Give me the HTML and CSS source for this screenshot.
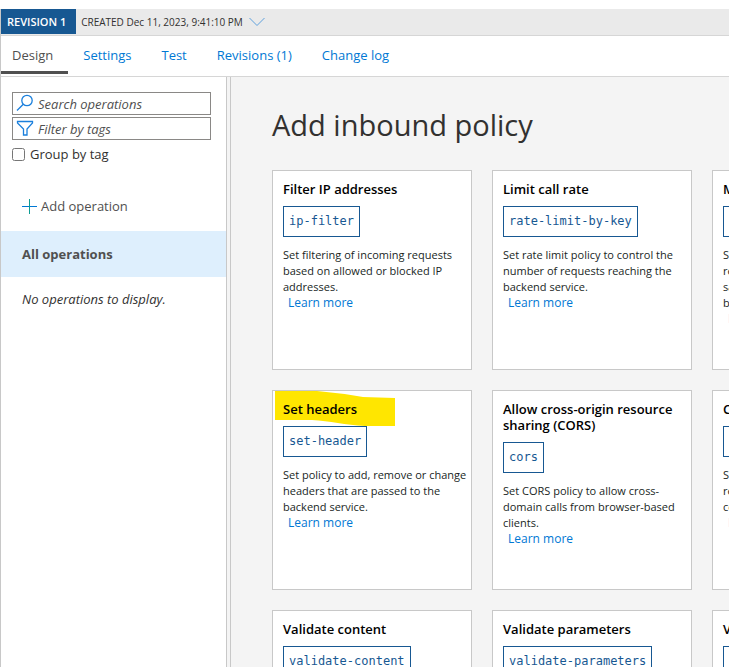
FILE: index.html
```html
<!DOCTYPE html>
<html lang="en">
<head>
<meta charset="utf-8">
<title>Add inbound policy</title>
<link rel="stylesheet" href="styles.css">
</head>
<body>
<div class="app">
  <header class="revision-bar">
    <span class="revision-badge">REVISION 1</span>
    <button class="revision-menu" type="button">CREATED Dec 11, 2023, 9:41:10 PM
      <svg class="chevron" width="16" height="10" viewBox="0 0 16 10" aria-hidden="true"><path d="M.5 1 8 8.500 15.500 1"/></svg>
    </button>
  </header>
  <nav class="tabs">
    <a class="tab tab-active" href="#design">Design</a>
    <a class="tab" href="#settings">Settings</a>
    <a class="tab" href="#test">Test</a>
    <a class="tab" href="#revisions">Revisions (1)</a>
    <a class="tab" href="#changelog">Change log</a>
  </nav>
  <div class="workspace">
    <aside class="sidebar">
      <div class="filters">
        <label class="field">
          <svg width="18" height="20" viewBox="0 0 18 20" aria-hidden="true"><circle cx="11" cy="6.500" r="5.200"/><path d="M7.300 10.200 1 16.500"/></svg>
          <input type="text" placeholder="Search operations" aria-label="Search operations">
        </label>
        <label class="field">
          <svg width="18" height="20" viewBox="0 0 18 20" aria-hidden="true"><path d="M1.500 2.500h15v1.500L11 10V16H7.500V10L1.500 4z"/></svg>
          <input type="text" placeholder="Filter by tags" aria-label="Filter by tags">
        </label>
        <label class="group-toggle"><input type="checkbox">Group by tag</label>
      </div>
      <button class="add-operation" type="button">
        <svg width="15" height="15" viewBox="0 0 15 15" aria-hidden="true"><path class="plus-h" d="M0 7.500h15"/><path class="plus-v" d="M7.500 0v15"/></svg>
        Add operation
      </button>
      <a class="all-operations" href="#all">All operations</a>
      <p class="empty">No operations to display.</p>
    </aside>
    <div class="splitter"></div>
    <main class="content">
      <h1>Add inbound policy</h1>
      <div class="cards">
        <article class="card">
          <h2>Filter IP addresses</h2>
          <code>ip-filter</code>
          <p>Set filtering of incoming requests<br>based on allowed or blocked IP<br>addresses.</p>
          <a href="#ip-filter">Learn more</a>
        </article>
        <article class="card">
          <h2>Limit call rate</h2>
          <code>rate-limit-by-key</code>
          <p>Set rate limit policy to control the<br>number of requests reaching the<br>backend service.</p>
          <a href="#rate-limit">Learn more</a>
        </article>
        <article class="card">
          <h2>Mock responses</h2>
          <code>mock-response</code>
          <p>Set mocking policy to<br>return a response based on the<br>samples. It does not call the<br>backend.</p>
          <a href="#mock">Learn more</a>
        </article>
        <article class="card">
          <svg class="marker" width="121" height="36" viewBox="0 0 121 36" aria-hidden="true"><path d="M0 0H42Q65 2 88 6L120 7V35H90C70 34 55 30 37 29H0z"/></svg>
          <h2>Set headers</h2>
          <code>set-header</code>
          <p>Set policy to add, remove or change<br>headers that are passed to the<br>backend service.</p>
          <a href="#set-header">Learn more</a>
        </article>
        <article class="card">
          <h2>Allow cross-origin resource<br>sharing (CORS)</h2>
          <code>cors</code>
          <p>Set CORS policy to allow cross-<br>domain calls from browser-based<br>clients.</p>
          <a href="#cors">Learn more</a>
        </article>
        <article class="card">
          <h2>Cache responses</h2>
          <code>cache-lookup</code>
          <p>Set response caching policies to<br>reduce latency and bandwidth<br>consumption.</p>
          <a href="#cache">Learn more</a>
        </article>
        <article class="card">
          <h2>Validate content</h2>
          <code>validate-content</code>
        </article>
        <article class="card">
          <h2>Validate parameters</h2>
          <code>validate-parameters</code>
        </article>
        <article class="card">
          <h2>Validate headers</h2>
          <code>validate-headers</code>
        </article>
      </div>
    </main>
  </div>
</div>
</body>
</html>
```
FILE: styles.css
```css
* { box-sizing: border-box; }
body {
  margin: 0;
  height: 100vh;
  overflow: hidden;
  background: #fff;
  color: #323130;
  font: 13px/18px "Open Sans", "Noto Sans", sans-serif;
}
a { color: #0078d4; text-decoration: none; }
button { border: 0; padding: 0; background: none; font: inherit; color: inherit; }
svg { flex: none; fill: none; stroke: #1a7fdc; }
.app {
  display: flex;
  flex-direction: column;
  height: calc(100vh - 9px);
  margin-top: 9px;
  border-left: 1px solid #c8c8c8;
}
.revision-bar {
  display: flex;
  flex: none;
  height: 27px;
  background: #eaeaea;
  border-bottom: 1px solid #d6d6d6;
  font-size: 11px;
}
.revision-badge {
  height: 25px;
  padding: 0 10px 0 6px;
  background: #175892;
  color: #fff;
  font-weight: 600;
  line-height: 26px;
}
.revision-menu { display: flex; align-items: center; gap: 6px; padding-left: 5px; font-size: 10px; }
.chevron { stroke: #5ea0dc; }
.tabs { display: flex; flex: none; height: 41px; border-bottom: 1px solid #d6d6d6; }
.tab { padding: 0 15px; line-height: 38px; }
.tab:first-child { padding-left: 11px; }
.tab-active { height: 38px; border-bottom: 3px solid #505050; color: #505050; }
.workspace { display: flex; flex: 1; min-height: 0; }
.sidebar { flex: none; width: 226px; border-right: 1px solid #c8c8c8; }
.splitter { flex: none; width: 4px; background: #f4f4f4; border-right: 1px solid #c8c8c8; }
.filters { display: flex; flex-direction: column; gap: 2px; padding: 15px 15px 0 11px; }
.field { display: flex; align-items: center; gap: 4px; height: 23px; padding-left: 3px; border: 1px solid #8a8886; }
.field svg { stroke-width: 1.3; }
.field input { flex: 1; min-width: 0; border: 0; outline: 0; padding: 0; background: none; font: inherit; }
.field input::placeholder { color: #505050; font-style: italic; opacity: 1; }
.group-toggle { display: flex; align-items: center; gap: 5px; padding-top: 3px; }
.group-toggle input { margin: 0; }
.add-operation { display: flex; align-items: center; gap: 4px; margin: 34px 0 0 21px; color: #505050; }
.plus-h { stroke: #0078d4; }
.plus-v { stroke: #0d9c94; }
.all-operations {
  display: block;
  margin-top: 16px;
  padding-left: 21px;
  background: #deeffd;
  color: #505050;
  font-weight: 700;
  line-height: 46px;
}
.empty { margin: 13px 0 0 21px; font-style: italic; }
.content { flex: 1; min-width: 0; overflow: hidden; padding: 28px 0 0 41px; background: #f4f4f4; }
h1 { margin: 0 0 25px; font-size: 29px; font-weight: 400; line-height: 40px; }
.cards { display: grid; grid-template-columns: repeat(3, 200px); grid-auto-rows: 200px; gap: 20px; }
.card {
  position: relative;
  display: flex;
  flex-direction: column;
  align-items: flex-start;
  padding: 10px;
  border: 1px solid #c8c8c8;
  background: #fff;
}
.card h2 { position: relative; margin: 0 0 9px; color: #000; font-size: 13px; font-weight: 600; line-height: 16px; white-space: nowrap; }
.card code {
  position: relative;
  padding: 0 5px;
  border: 1px solid #175892;
  background: #fff;
  color: #175892;
  font: 12px/29px "DejaVu Sans Mono", monospace;
}
.card p { margin: 10px 0 0; color: #201f1e; font-size: 11px; line-height: 16px; white-space: nowrap; }
.card a { margin-left: 5px; font-size: 12px; line-height: 16px; }
.marker { position: absolute; top: 0; left: 2px; fill: #ffe600; stroke: none; }
```
